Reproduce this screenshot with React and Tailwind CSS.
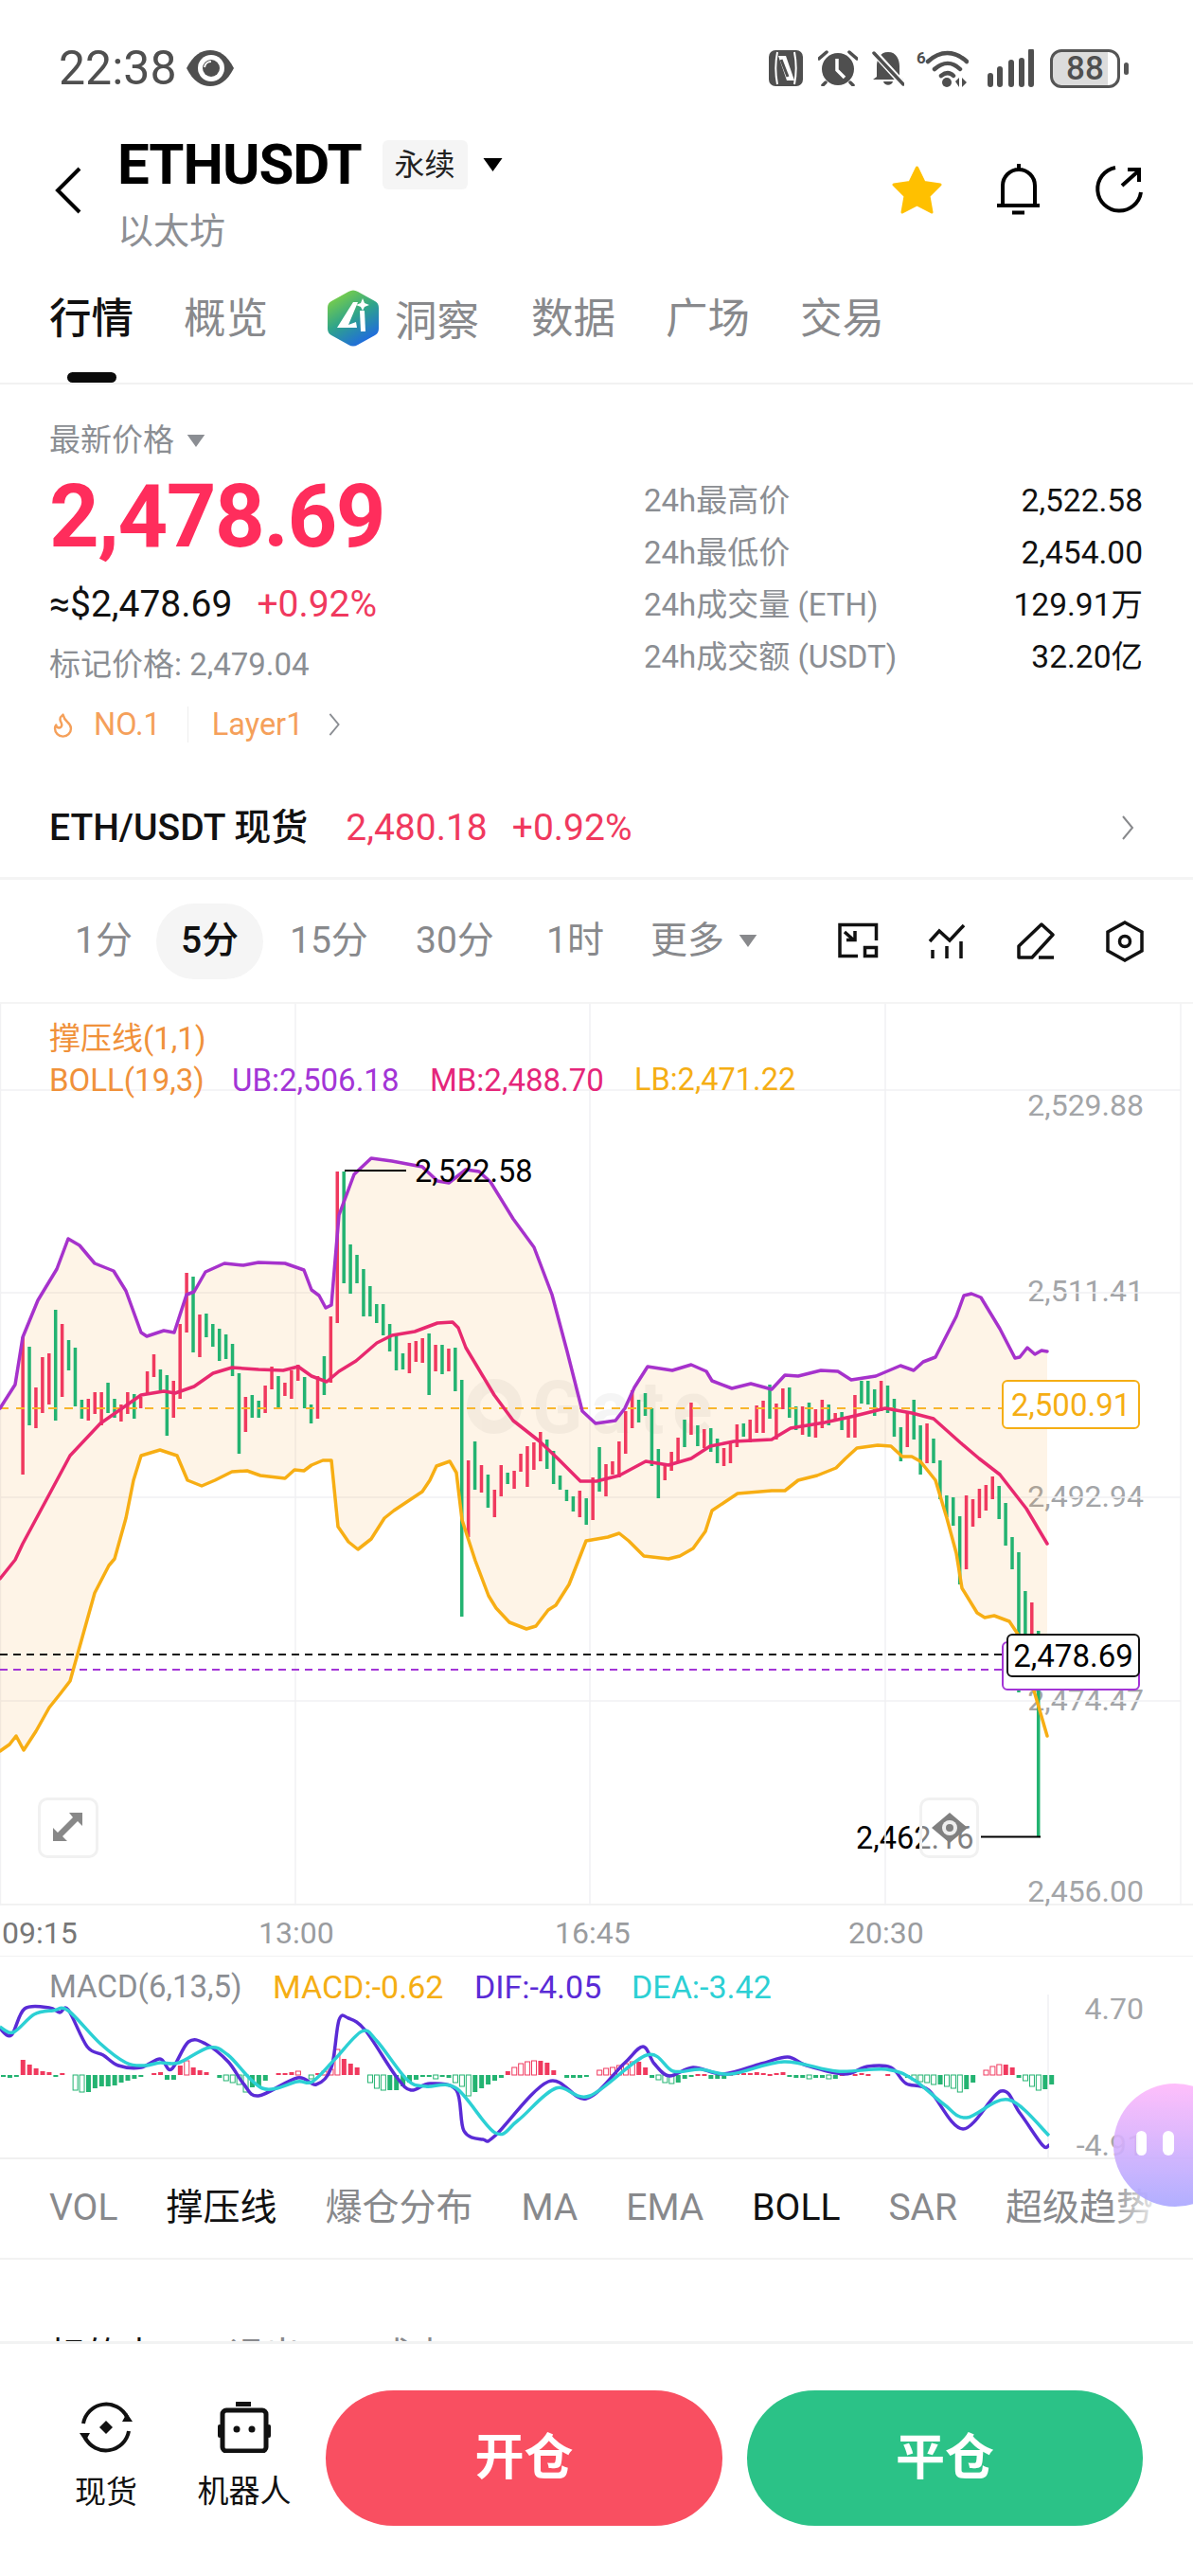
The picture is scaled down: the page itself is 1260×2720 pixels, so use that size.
import React from "react";
import { Flame } from "lucide-react";

const red = "#f0395e";
const green = "#23b371";

// bands, in page coordinates
const ub = [[0,1487],[16,1462],[24,1412],[40,1373],[60,1340],[72,1308],[84,1315],[100,1334],[120,1342],[133,1363],[149,1407],[155,1411],[173,1405],[184,1407],[197,1367],[205,1364],[217,1343],[237,1334],[257,1336],[273,1333],[301,1334],[321,1341],[329,1362],[337,1368],[344,1381],[350,1378],[358,1283],[374,1240],[392,1223],[414,1226],[446,1232],[462,1247],[474,1249],[492,1235],[506,1237],[518,1248],[542,1287],[564,1317],[583,1367],[599,1427],[615,1490],[629,1503],[650,1500],[660,1487],[670,1465],[684,1443],[710,1447],[730,1441],[746,1448],[752,1458],[773,1466],[793,1461],[815,1467],[829,1452],[843,1453],[867,1447],[885,1448],[899,1457],[925,1453],[951,1442],[965,1447],[975,1438],[988,1433],[1010,1390],[1018,1368],[1026,1366],[1036,1370],[1056,1403],[1072,1434],[1077,1433],[1085,1423],[1093,1430],[1100,1426],[1106,1427]];
const mb = [[0,1667],[16,1647],[24,1630],[52,1578],[74,1537],[106,1503],[129,1487],[149,1473],[173,1469],[185,1471],[205,1464],[225,1450],[245,1444],[273,1446],[299,1447],[315,1443],[329,1453],[345,1459],[358,1448],[376,1437],[398,1418],[414,1410],[438,1406],[462,1397],[478,1396],[484,1402],[492,1423],[522,1473],[542,1500],[570,1522],[589,1540],[613,1564],[630,1564],[654,1558],[682,1543],[706,1547],[730,1540],[750,1527],[775,1522],[815,1520],[835,1508],[871,1502],[903,1495],[935,1487],[963,1492],[986,1498],[1014,1523],[1034,1540],[1056,1557],[1084,1593],[1106,1630]];
const lb = [[0,1849],[10,1842],[17,1833],[25,1848],[38,1828],[52,1803],[64,1788],[74,1775],[100,1682],[115,1653],[121,1646],[133,1603],[141,1563],[149,1537],[169,1531],[187,1537],[198,1563],[213,1569],[227,1563],[245,1554],[261,1553],[275,1558],[301,1561],[311,1552],[321,1553],[329,1547],[341,1542],[350,1542],[357,1612],[368,1628],[378,1636],[392,1625],[406,1603],[416,1595],[446,1575],[454,1563],[461,1548],[475,1543],[482,1555],[488,1605],[502,1648],[516,1685],[524,1698],[538,1713],[556,1720],[566,1717],[579,1700],[587,1695],[601,1673],[619,1627],[642,1623],[654,1619],[664,1627],[680,1643],[706,1646],[718,1643],[732,1635],[745,1617],[752,1595],[779,1577],[815,1574],[829,1574],[843,1563],[863,1558],[883,1550],[893,1540],[905,1529],[927,1526],[941,1527],[953,1538],[963,1538],[972,1543],[988,1563],[1000,1603],[1010,1640],[1016,1677],[1032,1703],[1040,1708],[1050,1706],[1066,1712],[1076,1727]];
const lbEnd = [[1092,1785],[1106,1833]];

const candles = [["r",1412,1557],["g",1422,1505],["r",1465,1508],["r",1433,1492],["r",1429,1483],["g",1383,1500],["r",1398,1475],["g",1415,1447],["g",1423,1485],["g",1478,1498],["r",1477,1500],["r",1470,1493],["r",1470,1505],["g",1460,1492],["g",1477,1497],["r",1483,1501],["r",1470,1493],["g",1472,1498],["r",1475,1487],["r",1448,1473],["r",1430,1454],["g",1446,1468],["g",1452,1516],["r",1458,1497],["r",1398,1477],["r",1344,1407],["g",1348,1428],["r",1388,1433],["g",1387,1412],["g",1398,1422],["g",1403,1437],["g",1409,1435],["g",1419,1453],["g",1450,1535],["r",1475,1512],["g",1473,1497],["g",1479,1497],["r",1463,1492],["r",1443,1467],["g",1453,1487],["r",1460,1474],["r",1447,1477],["r",1441,1458],["g",1454,1487],["g",1483,1503],["r",1453,1498],["g",1432,1473],["r",1390,1460],["r",1237,1397],["g",1237,1355],["g",1314,1366],["g",1325,1355],["g",1340,1390],["g",1358,1390],["g",1377,1397],["g",1377,1410],["g",1398,1427],["g",1410,1447],["g",1429,1446],["r",1418,1450],["r",1416,1438],["r",1413,1439],["g",1408,1473],["r",1420,1448],["g",1420,1451],["r",1424,1448],["g",1423,1469],["g",1457,1707],["r",1542,1623],["g",1522,1573],["r",1547,1576],["g",1557,1592],["r",1573,1602],["r",1547,1580],["g",1555,1567],["r",1553,1572],["r",1535,1554],["r",1527,1570],["r",1523,1552],["r",1512,1543],["g",1520,1551],["g",1532,1567],["g",1558,1573],["g",1573,1585],["g",1580,1596],["r",1574,1602],["g",1582,1610],["r",1560,1605],
["g",1528,1575],["r",1546,1580],["r",1543,1557],["r",1522,1560],["r",1490,1535],["r",1468,1508],["g",1478,1502],["g",1471,1495],["g",1487,1548],["g",1530,1582],["r",1545,1563],["r",1533,1553],["r",1518,1545],["g",1499,1528],["r",1481,1515],["g",1505,1527],["r",1509,1529],["g",1508,1533],["g",1519,1545],["r",1529,1548],["r",1522,1545],["r",1504,1528],["g",1503,1517],["r",1499,1523],["r",1484,1513],["r",1479,1513],["g",1462,1498],["r",1482,1520],["r",1466,1488],["g",1465,1497],["g",1485,1510],["r",1485,1515],["g",1481,1517],["r",1488,1518],["r",1478,1508],["g",1483,1505],["r",1492,1500],["g",1491,1510],["r",1495,1518],["r",1473,1518],["g",1458,1482],["g",1458,1483],["g",1467,1495],["r",1458,1490],["g",1463,1492],["g",1477,1517],["g",1507,1543],["r",1492,1528],["g",1478,1520],["g",1505,1557],["r",1503,1545],["g",1519,1545],["g",1542,1583],["g",1579,1602],["g",1581,1611],["g",1601,1673],["r",1579,1657],["r",1583,1612],["r",1572,1603],["r",1568,1595],["r",1559,1583],["g",1569,1604],["g",1587,1632],["g",1623,1657],["g",1639,1787],["g",1680,1727],["r",1692,1730],["g",1722,1939]];

const toLine = (arr) => arr.map((p) => p.join(",")).join(" ");

// catmull-rom through the points, so the MACD lines come out rounded
const smooth = (pts) => {
  let d = `M${pts[0][0]} ${pts[0][1]}`;
  for (let i = 0; i < pts.length - 1; i++) {
    const p0 = pts[i - 1] ?? pts[i];
    const p1 = pts[i];
    const p2 = pts[i + 1];
    const p3 = pts[i + 2] ?? p2;
    const c1 = [p1[0] + (p2[0] - p0[0]) / 6, p1[1] + (p2[1] - p0[1]) / 6];
    const c2 = [p2[0] - (p3[0] - p1[0]) / 6, p2[1] - (p3[1] - p1[1]) / 6];
    d += ` C${c1[0]} ${c1[1]} ${c2[0]} ${c2[1]} ${p2[0]} ${p2[1]}`;
  }
  return d;
};

// MACD lines read off the crop, scaled to page coordinates
const macdPt = ([x, y]) => [Math.round(x / 1.244), Math.round(2040 + y / 2.306)];
const dif = [[0,235],[15,252],[32,187],[65,185],[78,195],[90,190],[115,280],[135,300],[155,325],[185,330],[210,310],[225,335],[247,268],[270,272],[300,315],[320,370],[340,400],[390,355],[415,372],[435,330],[445,215],[458,210],[480,240],[520,350],[540,385],[565,370],[600,385],[610,485],[635,505],[650,495],[720,365],[770,405],[820,320],[845,280],[860,320],[880,350],[910,330],[950,345],[1000,320],[1035,305],[1060,325],[1110,345],[1140,328],[1170,330],[1190,368],[1220,385],[1265,480],[1315,388],[1340,440],[1370,520],[1378,520]].map(macdPt);
const dea = [[0,230],[18,245],[45,200],[70,192],[90,192],[130,270],[165,318],[190,325],[210,318],[235,318],[275,282],[300,300],[345,380],[390,365],[410,365],[440,310],[475,243],[495,265],[535,360],[560,375],[600,380],[650,490],[680,460],[730,380],[775,400],[850,300],[885,338],[920,335],[960,345],[1030,315],[1100,340],[1165,335],[1200,360],[1240,420],[1270,452],[1325,408],[1378,495]].map(macdPt);
const hist = [-2,-3,-1,16,11,7,4,3,-1,2,0,-16,-18,-18,-14,-12,-12,-11,-8,-6,-4,-2,0,2,3,-5,-5,10,15,8,5,3,0,-3,-6,-8,-10,-18,-13,-12,-6,0,2,2,3,4,0,-4,2,4,6,27,17,12,8,0,-8,-14,-16,-16,-16,-12,-8,-5,-2,-2,-4,-2,-3,-8,-12,-22,-18,-14,-10,-6,-3,4,8,12,14,15,15,13,5,0,-3,-3,-3,-2,0,5,7,8,10,12,14,14,8,-3,-5,-8,-9,-8,-4,-2,1,1,-4,-4,-4,1,2,2,2,3,2,1,2,3,-2,-3,-3,-4,-3,-3,-4,-4,1,2,1,2,1,0,0,1,0,0,-3,-5,-7,-8,-10,-10,-12,-14,-18,-15,-8,0,5,9,11,11,8,-3,-6,-12,-16,-15,-10];

const Caret = ({ className }) => (
  <svg viewBox="0 0 20 14" className={className}>
    <path d="M0 0H20L10 14Z" fill="currentColor" />
  </svg>
);

const Chevron = ({ className }) => (
  <svg viewBox="0 0 14 26" className={className} fill="none" stroke="currentColor" strokeWidth="2">
    <path d="M2 1L12 13L2 25" />
  </svg>
);

const StatusBar = () => (
  <div className="flex h-[144px] items-center pl-[62px] text-[#4f4f4f]">
    <span className="text-[50px] leading-none">22:38</span>
    <svg viewBox="0 0 52 42" className="ml-[9px] h-[42px] w-[52px]">
      <path d="M1 21C8 7 17 2 26 2S44 7 51 21C44 35 35 40 26 40S8 35 1 21Z" fill="#4f4f4f" />
      <circle cx="27" cy="21" r="14" fill="#fff" />
      <circle cx="27" cy="21" r="9" fill="#4f4f4f" />
      <path d="M20 20a7 7 0 0 1 7-6" stroke="#fff" strokeWidth="2" fill="none" />
    </svg>
    <div className="ml-auto mr-[68px] flex items-center">
      <svg viewBox="0 0 36 38" className="h-[38px] w-[36px]">
        <rect width="36" height="38" rx="7" fill="#4f4f4f" />
        <path d="M9 2C7 12 7 26 9 36M27 2C29 12 29 26 27 36" stroke="#fff" strokeWidth="2" fill="none" />
        <path d="M10 6L18 6L27 32L19 32Z" fill="#fff" />
        <path d="M13 10L20 28" stroke="#4f4f4f" strokeWidth="3" />
      </svg>
      <svg viewBox="0 0 42 38" className="ml-[16px] h-[38px] w-[42px]">
        <circle cx="21" cy="20" r="17" fill="#4f4f4f" />
        <path d="M20 9V21L28 29" stroke="#fff" strokeWidth="3.5" fill="none" />
        <path d="M1 9L9 2M41 9L33 2M8 34L5 37M34 34L37 37" stroke="#4f4f4f" strokeWidth="3.5" strokeLinecap="round" />
      </svg>
      <svg viewBox="0 0 34 38" className="ml-[15px] h-[38px] w-[34px]">
        <path d="M17 2C26 2 29 10 29 17V28L33 31H1L5 28V17C5 10 8 2 17 2ZM12 33H22C21 38 13 38 12 33Z" fill="#4f4f4f" />
        <path d="M2 2L33 36" stroke="#fff" strokeWidth="7" />
        <path d="M2 3L33 36" stroke="#4f4f4f" strokeWidth="3.5" strokeLinecap="round" />
      </svg>
      <svg viewBox="0 0 55 41" className="ml-[13px] h-[41px] w-[55px]">
        <text x="0" y="15" fontSize="17" fontWeight="700" fill="#4f4f4f">6</text>
        <path d="M12 13C25 1 40 1 53 13M19 21C28 13 38 13 46 21M26 28C31 24 35 24 39 28" stroke="#4f4f4f" strokeWidth="4.5" fill="none" strokeLinecap="round" />
        <circle cx="32" cy="35" r="5" fill="#4f4f4f" />
        <path d="M41 34L45 30V40M48 30V40L53 35Z" fill="#4f4f4f" />
      </svg>
      <svg viewBox="0 0 50 40" className="ml-[20px] h-[40px] w-[50px]">
        <path d="M3 28V37M13 21V37M25 14V37M36 12V37M46 2V37" stroke="#4f4f4f" strokeWidth="6" strokeLinecap="round" />
      </svg>
      <div className="ml-[16px] flex h-[41px] w-[74px] items-center justify-center rounded-[12px] border-[3px] border-[#555] bg-[linear-gradient(90deg,#dcdcdc_85%,#fff_85%)] text-[35px] font-medium leading-none">
        88
      </div>
      <div className="ml-[4px] h-[13px] w-[5px] rounded-full bg-[#555]"></div>
    </div>
  </div>
);

const Header = () => (
  <div className="flex h-[141px] items-start">
    <svg viewBox="0 0 30 50" className="ml-[57px] mt-[32px] h-[50px] w-[30px]" fill="none" stroke="#000" strokeWidth="4">
      <path d="M27 2L4 25L27 48" />
    </svg>
    <div className="ml-[37px] flex flex-col">
      <div className="flex items-center">
        <span className="text-[60px] font-bold leading-[60px] tracking-[-1px] text-black">ETHUSDT</span>
        <span className="ml-[22px] flex h-[52px] w-[90px] items-center justify-center rounded-[6px] bg-[#f5f5f5] text-[32px] text-[#222]">永续</span>
        <Caret className="ml-[15px] h-[14px] w-[23px] text-black" />
      </div>
      <span className="mt-[18px] text-[38px] leading-[44px] text-[#8d8f94]">以太坊</span>
    </div>
    <div className="ml-auto mr-[52px] mt-[28px] flex items-center">
      <svg viewBox="0 0 55 52" className="h-[52px] w-[55px]">
        <path d="M27.5 3L35 18.5L52 21L40 33L43 50L27.5 42L12 50L15 33L3 21L20 18.5Z" fill="#ffc000" stroke="#ffc000" strokeWidth="3" strokeLinejoin="round" />
      </svg>
      <svg viewBox="272 152 50 56" className="ml-[55px] h-[56px] w-[50px]" fill="none" stroke="#000" strokeWidth="4">
        <path d="M280 196V176a17 17 0 0 1 34 0V196M297 158V153M274 197H319M290 204.500H303" />
      </svg>
      <svg viewBox="376 156 52 52" className="ml-[55px] h-[52px] w-[52px]" fill="none" stroke="#000" strokeWidth="4">
        <path d="M398 159A23 23 0 1 0 425 185M405 178L423 162M411 161H423V174" />
      </svg>
    </div>
  </div>
);

const Tabs = () => (
  <div className="relative flex h-[121px] items-start gap-[53px] border-b-2 border-[#f2f2f2] pl-[52px] pt-[30px] text-[44.5px] leading-[44px] text-[#88898c]">
    <span className="font-medium text-[#111]">行情</span>
    <span>概览</span>
    <span className="-mt-[1px] ml-[9px] flex items-center">
      <svg viewBox="0 0 56 60" className="-mt-[8px] mr-[16px] h-[60px] w-[56px]">
        <defs>
          <linearGradient id="aiGrad" x1="0.15" y1="0" x2="0.7" y2="1">
            <stop offset="0" stopColor="#86d63e" />
            <stop offset="0.5" stopColor="#2fa48a" />
            <stop offset="1" stopColor="#1e66e6" />
          </linearGradient>
        </defs>
        <path d="M23 2Q28 -1 33 2L51 12Q55 14 55 19V41Q55 46 51 48L33 58Q28 61 23 58L5 48Q1 46 1 41V19Q1 14 5 12Z" fill="url(#aiGrad)" />
        <path d="M11 40L28 13L33 13L23 37L31 34L32 40Z" fill="#fff" />
        <path d="M35 22L40 22L41 44L36 44Z" fill="#fff" />
        <path d="M38 9L40 14L45 16L40 18L38 22L36 18L31 16L36 14Z" fill="#fff" />
      </svg>
      <span>洞察</span>
    </span>
    <span className="ml-[2px]">数据</span>
    <span>广场</span>
    <span>交易</span>
    <div className="absolute left-[71px] top-[108px] h-[11px] w-[52px] rounded-full bg-[#0a0a0a]"></div>
  </div>
);

const stats = [
  ["24h最高价", "2,522.58"],
  ["24h最低价", "2,454.00"],
  ["24h成交量 (ETH)", "129.91万"],
  ["24h成交额 (USDT)", "32.20亿"],
];

const PriceInfo = () => (
  <div className="flex h-[413px] pl-[52px] pr-[53px]">
    <div className="flex w-[628px] flex-col pt-[39px]">
      <div className="flex h-[40px] items-center text-[33px] text-[#8b8e93]">
        最新价格
        <Caret className="ml-[13px] h-[13px] w-[20px]" />
      </div>
      <div className="mt-[15px] h-[92px] text-[92px] font-bold leading-[92px] tracking-[-1.5px] text-[#ff2d5c]">2,478.69</div>
      <div className="mt-[26px] flex h-[40px] items-center text-[39px]">
        <span className="text-[#111]">≈$2,478.69</span>
        <span className="ml-[26px] text-[#f0395e]">+0.92%</span>
      </div>
      <div className="mt-[24px] h-[40px] text-[33px] leading-[40px] text-[#8b8e93]">标记价格: 2,479.04</div>
      <div className="mt-[23px] flex h-[40px] items-center text-[32.5px] text-[#f5a05a]">
        <Flame size={29} strokeWidth={2} />
        <span className="ml-[18px]">NO.1</span>
        <span className="ml-[28px] h-[38px] w-[1px] bg-[#eeeeee]"></span>
        <span className="ml-[25px]">Layer1</span>
        <Chevron className="ml-[26px] h-[24px] w-[14px] text-[#8b8e93]" />
      </div>
    </div>
    <div className="flex flex-1 flex-col gap-[15px] pt-[103px]">
      {stats.map(([label, value]) => (
        <div key={label} className="flex h-[40px] items-center justify-between text-[33px]">
          <span className="text-[#8b8e93]">{label}</span>
          <span className="text-[33.5px] text-[#111]">{value}</span>
        </div>
      ))}
    </div>
  </div>
);

const SpotRow = () => (
  <div className="flex h-[110px] items-center border-b-[3px] border-[#f4f4f4] pl-[52px] pr-[62px] pt-[3px] text-[39px]">
    <span className="font-medium text-[#111]">ETH/USDT 现货</span>
    <span className="ml-[40px] text-[#f0395e]">2,480.18</span>
    <span className="ml-[26px] text-[#f0395e]">+0.92%</span>
    <Chevron className="ml-auto h-[26px] w-[14px] text-[#88898c]" />
  </div>
);

const Timeframes = () => (
  <div className="flex h-[131px] items-center whitespace-nowrap border-b-2 border-[#f4f4f4] pr-[52px] text-[39px] text-[#88898c]">
    <span className="ml-[79px] w-[58px]">1分</span>
    <span className="ml-[28px] flex h-[80px] w-[113px] items-center justify-center rounded-[40px] bg-[#f5f5f5] font-medium text-[#111]">5分</span>
    <span className="ml-[28px] w-[79px]">15分</span>
    <span className="ml-[54px] w-[81px]">30分</span>
    <span className="ml-[57px] w-[58px]">1时</span>
    <span className="ml-[52px] w-[76px]">更多</span>
    <Caret className="ml-[17px] h-[13px] w-[20px]" />
    <svg viewBox="44 24 45 40" className="ml-[84px] h-[40px] w-[45px]" fill="none" stroke="#111" strokeWidth="3.500">
      <path d="M66 59.500H47V26.500H85.500V43M73.500 50.500H85.500V59.500H73.500ZM52 34L62 43M54 42.500H63V33" />
    </svg>
    <svg viewBox="140 24 40 38" className="ml-[51px] h-[38px] w-[40px]" fill="none" stroke="#111" strokeWidth="3.500">
      <path d="M142 43L152 32L163 42L178 26M145 52V61M160 48V61M175 43V61" />
    </svg>
    <svg viewBox="234 22 41 40" className="ml-[54px] h-[40px] w-[41px]" fill="none" stroke="#111" strokeWidth="3.500" strokeLinejoin="round">
      <path d="M260 24L272 35L250 59H236V47ZM257 59H273" />
    </svg>
    <svg viewBox="328 21 40 44" className="ml-[53px] h-[44px] w-[40px]" fill="none" stroke="#111" strokeWidth="3.500">
      <path d="M348 23L366 33V53L348 63L330 53V33Z" />
      <circle cx="348" cy="43" r="5.500" />
    </svg>
  </div>
);

const axisLabel = "absolute right-[52px] -translate-y-1/2 text-[32px] leading-none text-[#a3a5a8]";
const tagText = "text-[33px] leading-none";

const Chart = () => (
  <div className="relative h-[952px] w-full border-b-2 border-[#f2f2f2]">
    <span className={`${axisLabel} top-[107px]`}>2,529.88</span>
    <span className={`${axisLabel} top-[303px]`}>2,511.41</span>
    <span className={`${axisLabel} top-[520px]`}>2,492.94</span>
    <span className={`${axisLabel} top-[735px]`}>2,474.47</span>
    <span className={`${axisLabel} top-[937px]`}>2,456.00</span>
    <span className="absolute left-[904px] top-[881px] -translate-y-1/2 text-[32.5px] leading-none text-black">2,462.16</span>

    <svg viewBox="0 1060 1260 952" className="absolute inset-0 h-[952px] w-[1260px]">
      <path d="M0 1151H1247M0 1365H1247M0 1581H1247M0 1796H1247M312 1060V2012M623 1060V2012M935 1060V2012M1247 1060V2012M0.500 1060V2012" stroke="#f1f1f3" strokeWidth="1.500" />
      <polygon points={toLine([...ub, [1106, 1730], ...[...lb].reverse()])} fill="#f59a23" fillOpacity="0.11" />
      <g opacity="0.035" fill="#000">
        <circle cx="522" cy="1485" r="22" fill="none" stroke="#000" strokeWidth="14" />
        <text x="562" y="1513" fontSize="78" fontWeight="700" letterSpacing="9" fontFamily="Roboto">Gate</text>
      </g>
      {candles.map(([c, top, bottom], i) => (
        <rect key={i} x={24.1 + i * 6.92 - 1.75} y={top} width="3.500" height={bottom - top} fill={c === "r" ? red : green} />
      ))}
      <path d="M0 1487H1058" stroke="#f8b62d" strokeWidth="2" strokeDasharray="9 8" />
      <path d="M0 1747H1058" stroke="#111" strokeWidth="2" strokeDasharray="8 6" />
      <path d="M0 1763H1058" stroke="#a335d6" strokeWidth="2" strokeDasharray="8 6" />
      <g fill="none" strokeWidth="3.500" strokeLinejoin="round" strokeLinecap="round">
        <polyline points={toLine(ub)} stroke="#a632cc" />
        <polyline points={toLine(mb)} stroke="#e8296f" />
        <polyline points={toLine([...lb, ...lbEnd])} stroke="#f7ae14" />
      </g>
      <path d="M364 1236H429M1036 1939.500H1099" stroke="#000" strokeWidth="2" />
    </svg>

    <div className="absolute left-[52px] top-[18px] flex flex-col gap-[7px] text-[33px] leading-[37px]">
      <span className="text-[#f0913a]">撑压线(1,1)</span>
      <div className="flex">
        <span className="w-[193px] text-[#f0913a]">BOLL(19,3)</span>
        <span className="w-[209px] text-[#a335d6]">UB:2,506.18</span>
        <span className="w-[216px] text-[#e5267a]">MB:2,488.70</span>
        <span className="text-[32.5px] text-[#f5ae14]">LB:2,471.22</span>
      </div>
    </div>
    <span className="absolute left-[438px] top-[177px] -translate-y-1/2 text-[32.5px] leading-none text-black">2,522.58</span>

    <div className="absolute left-[1058px] top-[397px] flex h-[52px] w-[146px] items-center justify-center rounded-[6px] border-2 border-[#f5ae14] bg-white text-[#f5ae14]">
      <span className={tagText}>2,500.91</span>
    </div>
    <div className="absolute left-[1058px] top-[673px] h-[52px] w-[146px] rounded-[6px] border-2 border-[#a335d6] bg-white"></div>
    <div className="absolute left-[1063px] top-[665px] flex h-[46px] w-[141px] items-center justify-center rounded-[6px] border-2 border-[#111] bg-white text-black">
      <span className={tagText}>2,478.69</span>
    </div>

    <div className="absolute left-[40px] top-[838px] flex h-[64px] w-[64px] items-center justify-center rounded-[10px] border-[3px] border-[#f1f1f1] bg-white">
      <svg viewBox="0 0 32 32" className="h-[32px] w-[32px]" fill="#888">
        <path d="M31 0V14L26 9L10 25L15 30H0V16L5 21L21 5L17 0Z" />
      </svg>
    </div>
    <div className="absolute left-[971px] top-[838px] flex h-[64px] w-[63px] items-center justify-center rounded-[10px] border-[3px] border-[#f1f1f1] bg-white/50">
      <svg viewBox="0 0 38 32" className="h-[32px] w-[38px]">
        <path d="M0 16L19 0L38 16L19 32Z" fill="#808080" />
        <circle cx="19" cy="16" r="8" fill="#eee" />
        <circle cx="19" cy="16" r="4" fill="#808080" />
      </svg>
    </div>
  </div>
);

const TimeAxis = () => (
  <div className="relative h-[54px] border-b border-[#f2f2f2] text-[32px] leading-none text-[#9a9c9f]">
    <span className="absolute left-[2px] top-[13px] text-[#777]">09:15</span>
    <span className="absolute left-[273px] top-[13px]">13:00</span>
    <span className="absolute left-[586px] top-[13px]">16:45</span>
    <span className="absolute left-[896px] top-[13px]">20:30</span>
  </div>
);

const Macd = () => (
  <div className="relative h-[214px] border-b-2 border-[#f0f0f0]">
    <svg viewBox="0 2066 1260 214" className="absolute inset-0 h-[214px] w-[1260px]">
      <path d="M1107 2106V2280" stroke="#f1f1f3" strokeWidth="1.500" />
      {hist.map((v, i) => {
        if (v === 0) return null;
        const x = i * 6.92 + 1;
        const c = v > 0 ? red : green;
        const y = v > 0 ? 2191 - v : 2191;
        const h = Math.max(Math.abs(v), 2);
        const prev = hist[i - 1] ?? 0;
        const growing = Math.abs(v) > Math.abs(prev) && v * prev >= 0 && Math.abs(v) > 3;
        return growing ? (
          <rect key={i} x={x} y={y} width="5" height={h} fill="#fff" stroke={c} strokeWidth="1" />
        ) : (
          <rect key={i} x={x} y={y} width="5" height={h} fill={c} />
        );
      })}
      <g fill="none" strokeWidth="3.500" strokeLinejoin="round">
        <path d={smooth(dif)} stroke="#5a2bd6" />
        <path d={smooth(dea)} stroke="#2cd0d4" />
      </g>
    </svg>
    <div className="absolute left-[52px] top-[14px] flex text-[33px] leading-[36px]">
      <span className="w-[236px] text-[#8b8e93]">MACD(6,13,5)</span>
      <span className="w-[213px] text-[34px] text-[#f5ae14]">MACD:-0.62</span>
      <span className="w-[166px] text-[34px] text-[#5a2bd6]">DIF:-4.05</span>
      <span className="text-[34px] text-[#2cd0d4]">DEA:-3.42</span>
    </div>
    <span className="absolute right-[52px] top-[55px] -translate-y-1/2 text-[32px] leading-none text-[#a3a5a8]">4.70</span>
    <span className="absolute right-[52px] top-[199px] -translate-y-1/2 text-[32px] leading-none text-[#a3a5a8]">-4.91</span>
  </div>
);

const Indicators = () => (
  <div className="relative flex h-[106px] items-center gap-[51px] overflow-hidden whitespace-nowrap border-b-2 border-[#f2f2f2] pb-[2px] pl-[52px] text-[39px] text-[#88898c]">
    <span>VOL</span>
    <span className="text-[#111]">撑压线</span>
    <span>爆仓分布</span>
    <span>MA</span>
    <span>EMA</span>
    <span className="text-[#111]">BOLL</span>
    <span>SAR</span>
    <span>超级趋势</span>
    <div className="absolute bottom-0 left-[1170px] top-0 w-[60px] bg-gradient-to-r from-transparent to-white"></div>
    <div className="absolute bottom-0 left-[1230px] top-0 w-[30px] bg-white"></div>
  </div>
);

const BottomBar = () => (
  <div className="flex h-[246px] items-start border-t-[3px] border-[#f2f3f3] pr-[53px] pt-[49px]">
    <div className="ml-[79px] flex w-[66px] flex-col items-center">
      <svg viewBox="0 0 56 56" className="mt-[11px] h-[56px] w-[56px]" fill="none" stroke="#111" strokeWidth="4">
        <path d="M4 24A24.500 24.500 0 0 1 50 17M52 32A24.500 24.500 0 0 1 6 39" />
        <path d="M45 22L56 22L50 13Z M11 34L0 34L6 43Z" fill="#111" stroke="none" />
        <path d="M28 21L35 28L28 35L21 28Z" fill="#111" stroke="none" />
      </svg>
      <span className="mt-[21px] whitespace-nowrap text-[33px] leading-[40px] text-[#111]">现货</span>
    </div>
    <div className="ml-[65px] flex w-[96px] flex-col items-center">
      <svg viewBox="0 0 56 54" className="mt-[12px] h-[54px] w-[56px]">
        <rect x="19" y="0" width="16" height="5" fill="#111" />
        <rect x="5" y="9" width="46" height="43" rx="4" fill="none" stroke="#111" strokeWidth="5" />
        <rect x="0" y="24" width="4" height="14" rx="2" fill="#111" />
        <rect x="52" y="24" width="4" height="14" rx="2" fill="#111" />
        <circle cx="20" cy="29" r="3.500" fill="#111" />
        <circle cx="36" cy="29" r="3.500" fill="#111" />
      </svg>
      <span className="mt-[21px] whitespace-nowrap text-[33px] leading-[40px] text-[#111]">机器人</span>
    </div>
    <button className="ml-[38px] flex h-[143px] w-[419px] items-center justify-center rounded-full bg-[#f94f61] text-[52px] font-bold text-white">开仓</button>
    <button className="ml-[26px] flex h-[143px] w-[418px] items-center justify-center rounded-full bg-[#2bc287] text-[52px] font-bold text-white">平仓</button>
  </div>
);

export default function App() {
  return (
    <div className="relative h-[2720px] w-[1260px] overflow-hidden bg-white font-['Roboto','Noto_Sans_CJK_SC',sans-serif]">
      <StatusBar />
      <Header />
      <Tabs />
      <PriceInfo />
      <SpotRow />
      <Timeframes />
      <Chart />
      <TimeAxis />
      <Macd />
      <Indicators />
      <div className="h-[86px] overflow-hidden whitespace-nowrap bg-white pl-[52px]">
        <div className="mt-[79px] text-[38px] leading-[44px] text-[#111]">
          标的中 <span className="ml-[66px] text-[#88898c]">退出</span> <span className="ml-[70px] text-[#88898c]">成本</span>
        </div>
      </div>
      <BottomBar />
      <div className="absolute left-[1176px] top-[2200px] h-[130px] w-[130px] rounded-full bg-gradient-to-b from-[#ffb8fb] to-[#a9a6ff] opacity-90">
        <div className="ml-[24px] mt-[50px] flex gap-[17px]">
          <div className="h-[26px] w-[11px] rounded-full bg-white"></div>
          <div className="h-[26px] w-[12px] rounded-full bg-white"></div>
        </div>
      </div>
    </div>
  );
}
